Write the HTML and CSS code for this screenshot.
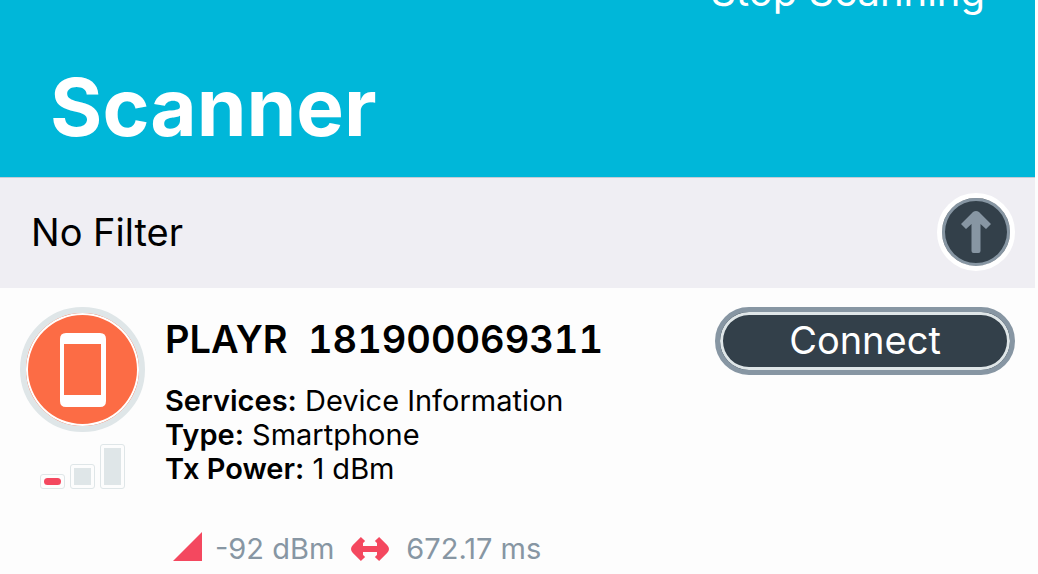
FILE: index.html
```html
<!DOCTYPE html>
<html lang="en">
<head>
  <meta charset="UTF-8" />
  <meta name="viewport" content="width=device-width, initial-scale=1.0" />
  <title>Scanner</title>
  <link rel="stylesheet" href="styles.css">
</head>
<body>
  <header class="navbar">
    <button class="scan-toggle">Stop Scanning</button>
    <h1>Scanner</h1>
  </header>

  <section class="filter-bar">
    <span class="filter-label">No Filter</span>
    <button class="filter-button" aria-label="Open filter">
      <svg viewBox="0 0 30 42" width="30" height="42">
        <path fill="#8796a3" d="M12 1Q15 -1 18 1L30 13L25 18L19.500 13V40Q19.500 42 17.500 42H12.500Q10.500 42 10.500 40V13L5 18L0 13Z" />
      </svg>
    </button>
  </section>

  <main class="device">
    <div class="device-status">
      <div class="device-icon">
        <svg viewBox="0 0 46 74" width="46" height="74">
          <path fill="#fff" fill-rule="evenodd" d="M6 0H40Q46 0 46 6V68Q46 74 40 74H6Q0 74 0 68V6Q0 0 6 0ZM4 11V62H41V11Z" />
        </svg>
      </div>
      <div class="signal">
        <span class="bar bar-low active"></span>
        <span class="bar bar-mid"></span>
        <span class="bar bar-high"></span>
      </div>
    </div>

    <div class="device-info">
      <h2>PLAYR&nbsp; 181900069311</h2>
      <div class="details">
        <p><strong>Services:</strong> Device Information</p>
        <p><strong>Type:</strong> Smartphone</p>
        <p><strong>Tx Power:</strong> 1 dBm</p>
      </div>
      <div class="metrics">
        <svg viewBox="0 0 29 34" width="29" height="34">
          <path fill="#f4485f" d="M29 0V29H0Z" />
        </svg>
        <span class="rssi">-92 dBm</span>
        <svg viewBox="0 0 38 26" width="38" height="26">
          <path d="M6 13H32M12 3L4 11Q2 13 4 15L12 23M26 3L34 11Q36 13 34 15L26 23" fill="none" stroke="#f4485f" stroke-width="6" />
          <path fill="#f4485f" d="M3 13L12 5V21ZM35 13L26 5V21Z" />
        </svg>
        <span>672.17 ms</span>
      </div>
    </div>

    <button class="connect-button">Connect</button>
  </main>
</body>
</html>
```
FILE: styles.css
```css
* {
  box-sizing: border-box;
}
body {
  margin: 0;
  padding-right: 3px;
  font-family: Inter, "Liberation Sans", sans-serif;
  background-color: #fdfdfd;
  color: #000;
  overflow: hidden;
}
h1, h2, p {
  margin: 0;
}
button {
  padding: 0;
  border: none;
  font-family: inherit;
  cursor: pointer;
}
svg {
  display: block;
}
.navbar {
  display: flex;
  flex-direction: column;
  padding: 0 50px 22px;
  background-color: #00b7d9;
  color: #fff;
}
.scan-toggle {
  align-self: flex-end;
  margin-top: -32px;
  background: none;
  color: #fff;
  font-size: 40px;
  line-height: 48px;
}
h1 {
  margin-top: 43px;
  font-size: 80px;
  font-weight: 700;
  line-height: 96px;
}
.filter-bar {
  display: flex;
  align-items: center;
  justify-content: space-between;
  padding: 15px 20px 17px 31px;
  border-top: 1px solid #c4ccd6;
  background-color: #efeef3;
}
.filter-label {
  font-size: 38px;
}
.filter-button {
  display: flex;
  align-items: center;
  justify-content: center;
  width: 78px;
  height: 78px;
  border: 5px solid #fff;
  border-radius: 50%;
  background-color: #33404a;
  box-shadow: inset 0 0 0 3px #8796a3;
}
.device {
  display: flex;
  align-items: flex-start;
  padding: 19px 20px;
}
.device-status {
  display: flex;
  flex-direction: column;
  align-items: center;
  gap: 12px;
}
.device-icon {
  display: flex;
  align-items: center;
  justify-content: center;
  width: 125px;
  height: 125px;
  border: 6px solid #dfe6e8;
  border-radius: 50%;
  background-color: #fc6c45;
  box-shadow: inset 0 0 0 2px #fff;
}
.signal {
  display: flex;
  align-items: flex-end;
  gap: 5px;
}
.bar {
  width: 25px;
  padding: 3px;
  border: 1px solid #dfe6e8;
  border-radius: 3px;
  background-color: #dfe6e8;
  background-clip: content-box;
}
.bar-low {
  height: 15px;
}
.bar-mid {
  height: 25px;
}
.bar-high {
  height: 45px;
}
.bar.active {
  background: none;
}
.bar.active::before {
  content: "";
  display: block;
  height: 7px;
  border-radius: 4px;
  background-color: #f4485f;
}
.device-info {
  flex: 1;
  padding: 8px 0 0 20px;
}
h2 {
  font-size: 38px;
  font-weight: 600;
  font-variant-numeric: tabular-nums;
  line-height: 48px;
}
.details {
  margin-top: 21px;
  font-size: 29px;
  line-height: 34px;
}
.details strong {
  font-weight: 600;
}
.metrics {
  display: flex;
  align-items: center;
  gap: 17px;
  margin-top: 45px;
  padding-left: 8px;
  color: #8796a3;
  font-size: 29px;
  line-height: 36px;
}
.rssi {
  margin-left: -4px;
}
.connect-button {
  width: 300px;
  height: 68px;
  padding-bottom: 2px;
  border: 5px solid #8796a3;
  border-radius: 34px;
  background-color: #33404a;
  box-shadow: inset 0 0 0 3px #dfe6e8;
  color: #fff;
  font-size: 38px;
}
```
